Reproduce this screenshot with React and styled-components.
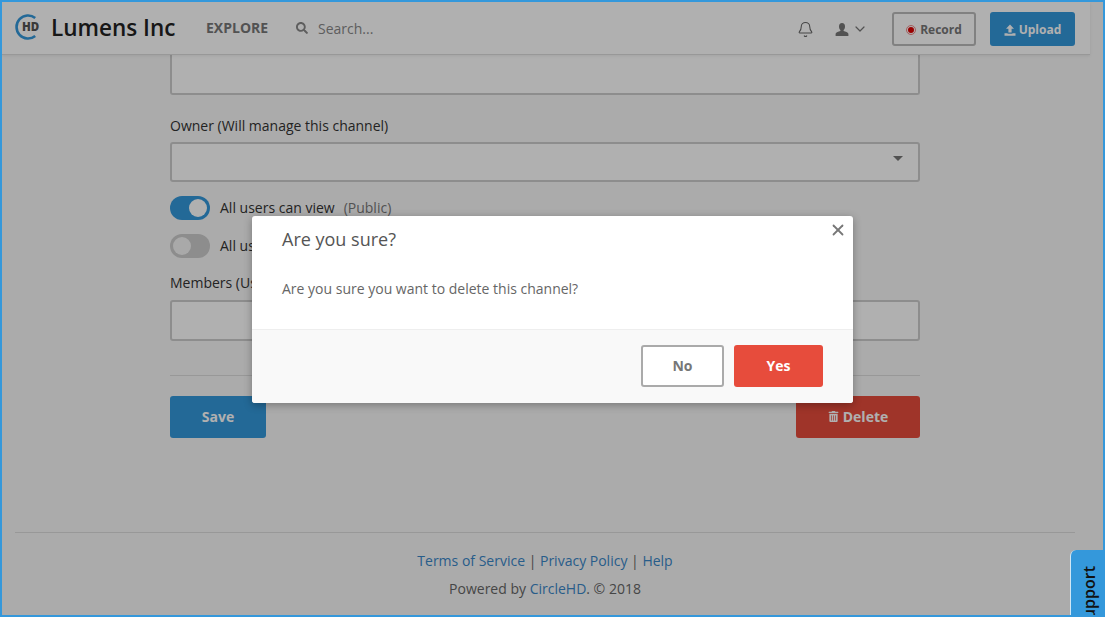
import React from "react";
import styled, { createGlobalStyle } from "styled-components";
import { Bell, ChevronDown, X } from "lucide-react";
import { FaTrashAlt, FaSearch } from "react-icons/fa";

const GlobalStyle = createGlobalStyle`
  html, body {
    margin: 0;
    height: 100%;
    overflow: hidden;
    background: #f8f8f8;
    font-family: "Open Sans", "Liberation Sans", sans-serif;
    font-size: 14px;
    color: #333;
  }
  * {
    box-sizing: border-box;
  }
`;

const Logo = () => (
  <svg width="26" height="26" viewBox="0 0 26 26">
    <path
      d="M20.2 4 A11.5 11.5 0 1 0 20.2 22"
      fill="none"
      stroke="#3498db"
      strokeWidth="2.6"
    />
    <text
      x="7"
      y="17.2"
      fontFamily="Open Sans, sans-serif"
      fontWeight="800"
      fontSize="11.5"
      fill="#555"
    >
      HD
    </text>
  </svg>
);

const UserGlyph = () => (
  <svg width="14" height="13" viewBox="0 0 14 13" fill="currentColor">
    <path d="M7 0 C9 0 10 1.5 10 3.4 C10 5 9.3 6.3 8.6 7 V8 C10.5 8.8 13 9.2 13.4 10.8 V13 H0.6 V10.8 C1 9.2 3.5 8.8 5.4 8 V7 C4.7 6.3 4 5 4 3.4 C4 1.5 5 0 7 0 Z" />
  </svg>
);

const UploadGlyph = () => (
  <svg width="12" height="12" viewBox="0 0 12 12" fill="#fff">
    <path d="M6 0.5 L10 4.8 H7.6 V8.4 H4.4 V4.8 H2 Z" />
    <path d="M0.5 9.2 H3.6 V9.8 H8.4 V9.2 H11.5 V11.8 H0.5 Z" />
  </svg>
);

const App = () => {
  return (
    <Viewport>
      <GlobalStyle />
      <Page>
        <TopBar>
          <Brand>
            <Logo />
            <BrandName>Lumens Inc</BrandName>
          </Brand>
          <NavLink>EXPLORE</NavLink>
          <SearchBox>
            <FaSearch size={12} />
            <span>Search...</span>
          </SearchBox>
          <BarRight>
            <IconSlot>
              <Bell size={17} strokeWidth={1.5} />
            </IconSlot>
            <UserSlot>
              <UserGlyph />
              <ChevronDown size={16} strokeWidth={1.8} />
            </UserSlot>
            <RecordButton>
              <RecordDot />
              Record
            </RecordButton>
            <UploadButton>
              <UploadGlyph />
              Upload
            </UploadButton>
          </BarRight>
        </TopBar>

        <Form>
          <ClippedInput />
          <FieldLabel>Owner (Will manage this channel)</FieldLabel>
          <SelectBox>
            <Caret />
          </SelectBox>
          <ToggleRow>
            <Toggle $on>
              <Knob $on />
            </Toggle>
            <RowText>All users can view</RowText>
            <Muted>(Public)</Muted>
          </ToggleRow>
          <ToggleRow>
            <Toggle>
              <Knob />
            </Toggle>
            <RowText>All users can upload</RowText>
          </ToggleRow>
          <FieldLabel $members>Members (Users who can view)</FieldLabel>
          <TextBox />
          <Divider />
          <FormActions>
            <SaveButton>Save</SaveButton>
            <DeleteButton>
              <FaTrashAlt size={11} />
              Delete
            </DeleteButton>
          </FormActions>
        </Form>

        <Footer>
          <FooterLine>
            <a>Terms of Service</a> | <a>Privacy Policy</a> | <a>Help</a>
          </FooterLine>
          <FooterLine>
            Powered by <a>CircleHD</a>. © 2018
          </FooterLine>
        </Footer>
      </Page>

      <Backdrop>
        <Modal>
          <CloseIcon>
            <X size={18} strokeWidth={2.4} />
          </CloseIcon>
          <ModalBody>
            <ModalTitle>Are you sure?</ModalTitle>
            <ModalText>Are you sure you want to delete this channel?</ModalText>
          </ModalBody>
          <ModalFooter>
            <NoButton>No</NoButton>
            <YesButton>Yes</YesButton>
          </ModalFooter>
        </Modal>
      </Backdrop>

      <SupportTab>
        <SupportLabel>Support</SupportLabel>
      </SupportTab>
      <BlueFrame />
    </Viewport>
  );
};

export default App;

const Viewport = styled.div`
  position: relative;
  width: 1105px;
  height: 617px;
  overflow: hidden;
`;

const Page = styled.div`
  width: 1090px;
  padding: 0 2px;
`;

const TopBar = styled.header`
  display: flex;
  align-items: center;
  height: 53px;
  width: 1088px;
  margin-top: 2px;
  padding: 0 15px 2px 13px;
  background: #fff;
  border-bottom: 1px solid #ddd;
  box-shadow: 0 1px 3px rgba(0, 0, 0, 0.08);
  position: relative;
`;

const Brand = styled.div`
  display: flex;
  align-items: center;
  gap: 10px;
  width: 191px;
`;

const BrandName = styled.span`
  font-size: 22.5px;
  font-weight: 600;
  color: #222;
  line-height: 26px;
  position: relative;
  top: 1px;
`;

const NavLink = styled.span`
  font-size: 14px;
  font-weight: 700;
  color: #777;
  width: 90px;
`;

const SearchBox = styled.div`
  display: flex;
  align-items: center;
  gap: 10px;
  color: #888;
  font-size: 14px;
  position: relative;
  top: 1px;
`;

const BarRight = styled.div`
  display: flex;
  align-items: center;
  margin-left: auto;
  position: relative;
  top: 2px;
`;

const IconSlot = styled.span`
  display: flex;
  color: #666;
  width: 38px;
`;

const UserSlot = styled.span`
  display: flex;
  align-items: center;
  gap: 3px;
  color: #777;
  width: 57px;
`;

const RecordButton = styled.button`
  display: flex;
  align-items: center;
  justify-content: center;
  gap: 4px;
  width: 84px;
  height: 34px;
  margin-right: 14px;
  padding: 1px 0 0;
  border: 2px solid #bbb;
  border-radius: 3px;
  background: transparent;
  font: 700 12px "Open Sans", sans-serif;
  color: #777;
`;

const RecordDot = styled.i`
  width: 10px;
  height: 10px;
  border-radius: 50%;
  background: #e00000;
  border: 2px solid #fff;
  outline: 1px solid #e88;
  outline-offset: -1px;
`;

const UploadButton = styled.button`
  display: flex;
  align-items: center;
  justify-content: center;
  gap: 3px;
  width: 85px;
  height: 34px;
  padding: 1px 0 0;
  border: 0;
  border-radius: 3px;
  background: #3498db;
  font: 700 12px "Open Sans", sans-serif;
  color: #fff;
`;

const Form = styled.main`
  width: 750px;
  margin: 0 auto;
`;

const ClippedInput = styled.div`
  height: 40px;
  background: #fff;
  border: 2px solid #ccc;
  border-top: 0;
  border-radius: 0 0 3px 3px;
`;

const FieldLabel = styled.label`
  display: block;
  margin-top: ${({ $members }) => ($members ? "15px" : "21px")};
  height: 20px;
  line-height: 20px;
  font-size: 14px;
  color: #333;
`;

const SelectBox = styled.div`
  position: relative;
  height: 40px;
  margin-top: 6px;
  background: #fff;
  border: 2px solid #ccc;
  border-radius: 3px;
`;

const Caret = styled.i`
  position: absolute;
  right: 15px;
  top: 12px;
  border: 5px solid transparent;
  border-top: 5px solid #777;
  border-bottom: 0;
`;

const ToggleRow = styled.div`
  display: flex;
  align-items: center;
  height: 24px;
  margin-top: 14px;
  font-size: 14px;
`;

const Toggle = styled.span`
  display: flex;
  align-items: center;
  justify-content: ${({ $on }) => ($on ? "flex-end" : "flex-start")};
  width: 40px;
  height: 24px;
  margin-right: 10px;
  padding: 0 3px;
  border-radius: 12px;
  background: ${({ $on }) => ($on ? "#3498db" : "#ccc")};
`;

const Knob = styled.i`
  width: 18px;
  height: 18px;
  border-radius: 50%;
  background: ${({ $on }) => ($on ? "#fff" : "#f5f5f5")};
`;

const RowText = styled.span`
  margin-bottom: 2px;
`;

const Muted = styled(RowText)`
  margin-left: 9px;
  color: #777;
`;

const TextBox = styled.div`
  height: 41px;
  margin-top: 7px;
  background: #fff;
  border: 2px solid #ccc;
  border-radius: 3px;
`;

const Divider = styled.hr`
  margin: 34px 0 20px;
  border: 0;
  border-top: 1px solid #ddd;
`;

const FormActions = styled.div`
  display: flex;
  justify-content: space-between;
`;

const SaveButton = styled.button`
  width: 96px;
  height: 42px;
  padding: 0 0 2px;
  border: 0;
  border-radius: 3px;
  background: #3498db;
  color: #fff;
  font: 700 14px "Open Sans", sans-serif;
`;

const DeleteButton = styled(SaveButton)`
  display: flex;
  align-items: center;
  justify-content: center;
  gap: 4px;
  width: 124px;
  background: #e74c3c;
`;

const Footer = styled.footer`
  width: 1060px;
  margin: 94px auto 0;
  padding-top: 14px;
  border-top: 1px solid #ddd;
  text-align: center;
  color: #666;

  a {
    color: #3a87c8;
  }
`;

const FooterLine = styled.div`
  height: 28px;
  line-height: 28px;
  font-size: 14px;
`;

const Backdrop = styled.div`
  position: absolute;
  inset: 0;
  display: flex;
  align-items: flex-start;
  padding: 216px 0 0 252px;
  background: rgba(0, 0, 0, 0.31);
`;

const Modal = styled.div`
  position: relative;
  width: 601px;
  height: 187px;
  display: flex;
  flex-direction: column;
  background: #fff;
  border-radius: 3px;
  box-shadow: 0 2px 8px rgba(0, 0, 0, 0.3);
`;

const CloseIcon = styled.span`
  position: absolute;
  top: 5px;
  right: 6px;
  display: flex;
  color: #777;
`;

const ModalBody = styled.div`
  flex: 1;
  padding: 11px 30px 0;
  border-bottom: 1px solid #eee;
`;

const ModalTitle = styled.h3`
  margin: 0;
  height: 24px;
  line-height: 24px;
  font-size: 18px;
  font-weight: 400;
  color: #555;
`;

const ModalText = styled.p`
  margin: 28px 0 0;
  line-height: 20px;
  font-size: 14px;
  color: #666;
`;

const ModalFooter = styled.div`
  display: flex;
  justify-content: flex-end;
  gap: 10px;
  height: 73px;
  padding: 15px 30px 0 0;
  background: #f9f9f9;
  border-radius: 0 0 3px 3px;
`;

const NoButton = styled.button`
  width: 83px;
  height: 42px;
  padding: 0 0 2px;
  background: #fff;
  border: 2px solid #aaa;
  border-radius: 3px;
  color: #777;
  font: 700 14px "Open Sans", sans-serif;
`;

const YesButton = styled.button`
  width: 89px;
  height: 42px;
  padding: 0 0 2px;
  background: #e74c3c;
  border: 0;
  border-radius: 3px;
  color: #fff;
  font: 700 14px "Open Sans", sans-serif;
`;

const SupportTab = styled.div`
  position: absolute;
  left: 1070px;
  top: 550px;
  width: 40px;
  height: 90px;
  background: #3498db;
  border-left: 1px solid #cfe6f5;
  border-radius: 6px 0 0 0;
`;

const SupportLabel = styled.span`
  position: absolute;
  left: 7px;
  top: 16px;
  writing-mode: vertical-rl;
  transform: rotate(180deg);
  font-size: 16px;
  font-weight: 600;
  color: #111;
`;

const BlueFrame = styled.div`
  position: absolute;
  inset: 0;
  border: 2px solid #3498db;
  pointer-events: none;
`;
